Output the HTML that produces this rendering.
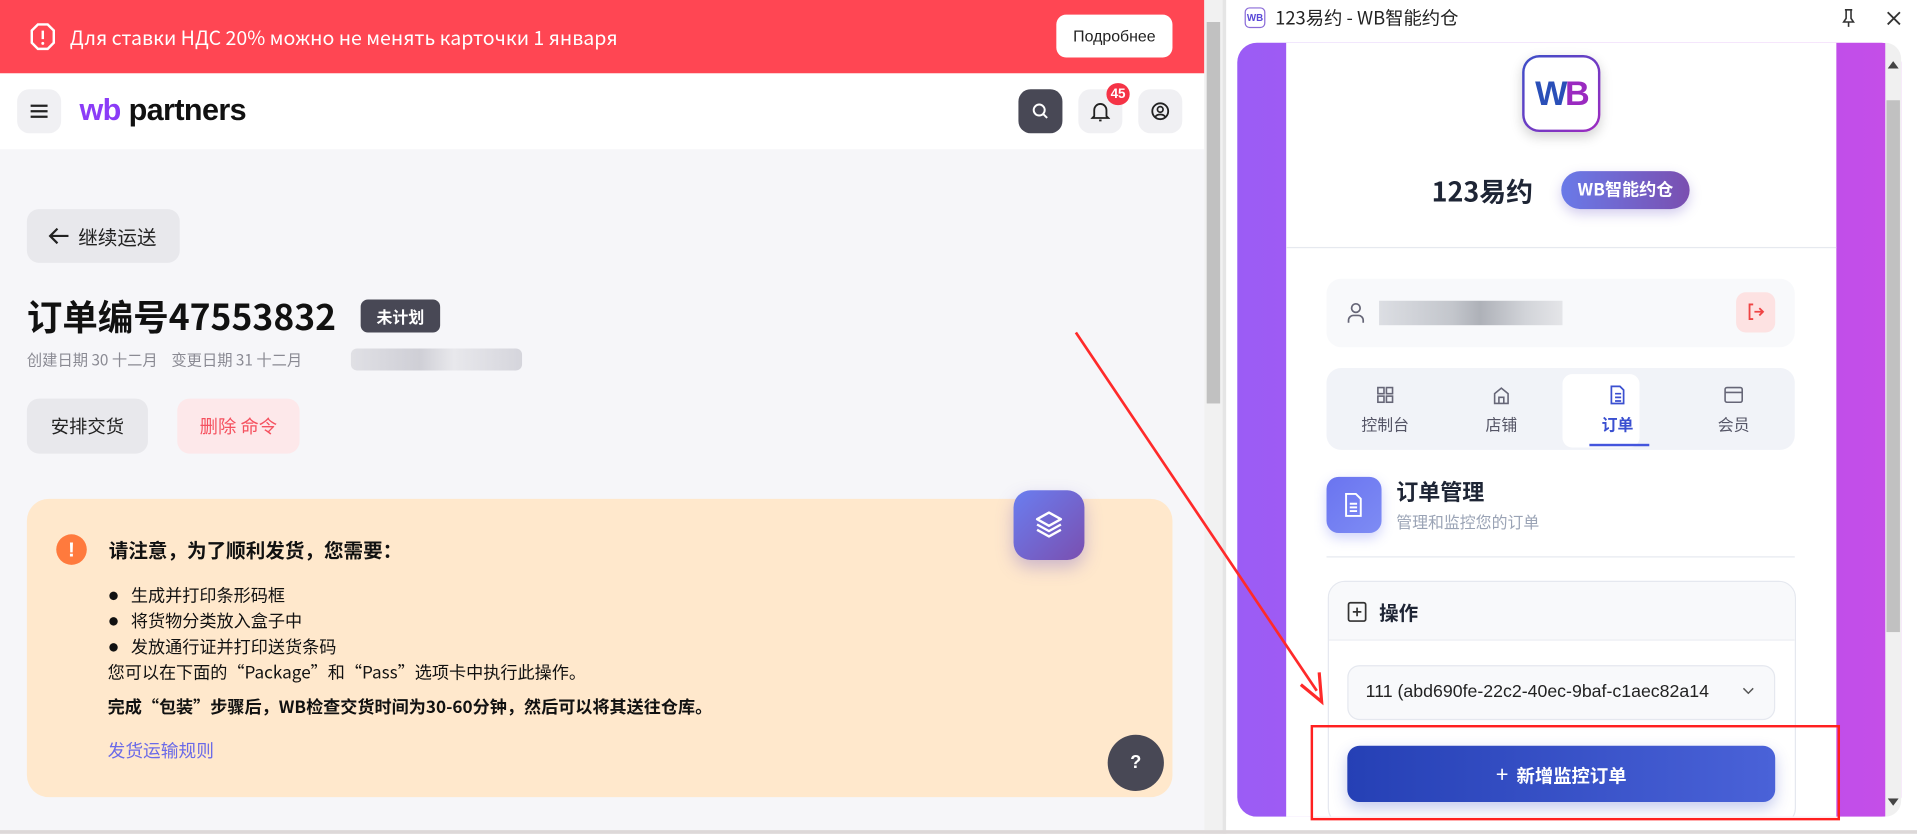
<!DOCTYPE html>
<html><head><meta charset="utf-8"><style>
*{margin:0;padding:0;box-sizing:border-box}
html,body{width:1917px;height:834px;overflow:hidden;background:#fff}
#s{position:absolute;left:0;top:0;width:1568px;height:682px;transform:scale(1.2226);transform-origin:0 0;font-family:"Liberation Sans","Noto Sans CJK SC",sans-serif;}
.a{position:absolute}
.cjk{font-family:"Noto Sans CJK SC","Liberation Sans",sans-serif}
</style></head><body><div id="s">
<!-- left -->
<div class="a" style="left:0;top:0;width:985px;height:682px;background:#f6f6f9"></div>
<div class="a" style="left:0;top:0;width:985px;height:60px;background:#ff4653"></div>
<svg class="a" style="left:24px;top:18px" width="22" height="24" viewBox="0 0 22 24"><path d="M7 2h8l5 5v10l-5 5H7l-5-5V7z" fill="none" stroke="#fff" stroke-width="2"/><path d="M11 7v7" stroke="#fff" stroke-width="2"/><circle cx="11" cy="17.5" r="1.2" fill="#fff"/></svg>
<div class="a cjk" style="left:57px;top:19px;color:#fff;font-size:16px;line-height:22px">Для ставки НДС 20% можно не менять карточки 1 января</div>
<div class="a" style="left:864px;top:12px;width:95px;height:35px;background:#fff;border-radius:8px;font-size:13px;line-height:35px;text-align:center;color:#222">Подробнее</div>
<div class="a" style="left:0;top:60px;width:985px;height:62px;background:#fff"></div>
<div class="a" style="left:14px;top:73px;width:36px;height:36px;background:#f0f0f3;border-radius:10px"></div>
<svg class="a" style="left:25px;top:85px" width="14" height="12"><path d="M0 1.5h14M0 6h14M0 10.5h14" stroke="#222" stroke-width="1.8"/></svg>
<div class="a" style="left:65px;top:75px;font-size:25px;font-weight:bold;letter-spacing:-0.5px;line-height:30px"><span style="color:#8b3cf7">wb</span> <span style="color:#111">partners</span></div>
<div class="a" style="left:833px;top:73px;width:36px;height:36px;background:#484855;border-radius:10px"></div>
<svg class="a" style="left:843px;top:83px" width="16" height="16"><circle cx="7" cy="7" r="4.5" fill="none" stroke="#fff" stroke-width="1.6"/><path d="M10.5 10.5l3 3" stroke="#fff" stroke-width="1.6"/></svg>
<div class="a" style="left:882px;top:73px;width:36px;height:36px;background:#f0f0f3;border-radius:10px"></div>
<svg class="a" style="left:892px;top:82px" width="16" height="18"><path d="M3 13V8a5 5 0 0110 0v5l1.5 1.5h-13z" fill="none" stroke="#222" stroke-width="1.5"/><path d="M7 16.5h2" stroke="#222" stroke-width="1.5"/></svg>
<div class="a" style="left:905px;top:68px;width:19px;height:18px;background:#f53346;border-radius:9px;color:#fff;font-size:11px;font-weight:bold;text-align:center;line-height:18px">45</div>
<div class="a" style="left:931px;top:73px;width:36px;height:36px;background:#f0f0f3;border-radius:10px"></div>
<svg class="a" style="left:941px;top:83px" width="16" height="16"><circle cx="8" cy="8" r="6.5" fill="none" stroke="#222" stroke-width="1.5"/><circle cx="8" cy="6.5" r="2.3" fill="none" stroke="#222" stroke-width="1.4"/><path d="M4 12.5c1.5-2.5 6.5-2.5 8 0" fill="none" stroke="#222" stroke-width="1.4"/></svg>

<div class="a" style="left:22px;top:171px;width:125px;height:44px;background:#e8e8ec;border-radius:10px"></div>
<svg class="a" style="left:39px;top:185px" width="18" height="16"><path d="M17 8H2M8 2L2 8l6 6" fill="none" stroke="#222" stroke-width="1.8"/></svg>
<div class="a cjk" style="left:64px;top:183px;font-size:16px;line-height:20px;color:#222">继续运送</div>
<div class="a cjk" style="left:22px;top:240px;font-size:29px;font-weight:bold;line-height:36px;color:#111">订单编号47553832</div>
<div class="a cjk" style="left:295px;top:245px;width:65px;height:27px;background:#484855;border-radius:6px;color:#fff;font-size:13px;font-weight:bold;text-align:center;line-height:27px">未计划</div>
<div class="a cjk" style="left:22px;top:286px;font-size:12.5px;color:#8a8a93;line-height:16px">创建日期 30 十二月 &nbsp;&nbsp;&nbsp;变更日期 31 十二月</div>
<div class="a" style="left:287px;top:285px;width:140px;height:18px;background:linear-gradient(90deg,#e0e0e5,#cfcfd6 40%,#e8e8ec 60%,#d5d5dc);border-radius:5px"></div>
<div class="a cjk" style="left:22px;top:326px;width:99px;height:45px;background:#e8e8ec;border-radius:10px;font-size:15px;line-height:45px;text-align:center;color:#222">安排交货</div>
<div class="a cjk" style="left:145px;top:326px;width:100px;height:45px;background:#fde8ea;border-radius:10px;font-size:15px;line-height:45px;text-align:center;color:#f5515f">删除 命令</div>

<div class="a" style="left:22px;top:408px;width:937px;height:244px;background:#ffe8cc;border-radius:18px"></div>
<div class="a" style="left:46px;top:437px;width:25px;height:25px;background:#ff7a3d;border-radius:50%;color:#fff;font-weight:bold;font-size:17px;text-align:center;line-height:25px">!</div>
<div class="a cjk" style="left:89px;top:438px;font-size:16px;font-weight:bold;color:#111;line-height:22px">请注意，为了顺利发货，您需要：</div>
<div class="a cjk" style="left:88px;top:477px;font-size:14px;line-height:20px;color:#111">
<div><span style="font-family:'Liberation Sans';font-size:16px">●</span>&nbsp;&nbsp;&nbsp;生成并打印条形码框</div><div><span style="font-family:'Liberation Sans';font-size:16px">●</span>&nbsp;&nbsp;&nbsp;将货物分类放入盒子中</div><div><span style="font-family:'Liberation Sans';font-size:16px">●</span>&nbsp;&nbsp;&nbsp;发放通行证并打印送货条码</div><div>您可以在下面的“Package”和“Pass”选项卡中执行此操作。</div></div>
<div class="a cjk" style="left:88px;top:568px;font-size:14px;font-weight:bold;line-height:20px;color:#111">完成“包装”步骤后，WB检查交货时间为30-60分钟，然后可以将其送往仓库。</div>
<div class="a cjk" style="left:88px;top:604px;font-size:14.5px;line-height:20px;color:#6a6ae8">发货运输规则</div>
<div class="a" style="left:829px;top:401px;width:58px;height:57px;background:linear-gradient(135deg,#6a7ef0,#7a4fb0);border-radius:14px;box-shadow:0 6px 14px rgba(110,90,200,.35)"></div>
<svg class="a" style="left:845px;top:416px" width="26" height="26" viewBox="0 0 24 24"><path d="M12 3l9 5-9 5-9-5z M3 12l9 5 9-5 M3 16l9 5 9-5" fill="none" stroke="#fff" stroke-width="1.8" stroke-linejoin="round"/></svg>
<div class="a" style="left:906px;top:601px;width:46px;height:46px;background:#484855;border-radius:50%;color:#fff;font-weight:bold;font-size:15px;text-align:center;line-height:46px">?</div>
<div class="a" style="left:985px;top:0;width:15px;height:682px;background:#f1f1f1"></div>
<div class="a" style="left:987px;top:18px;width:11px;height:312px;background:#c1c1c1"></div>
<div class="a" style="left:1000px;top:0;width:3px;height:682px;background:#e5e5e5"></div>

<!-- right -->
<div class="a" style="left:1003px;top:0;width:565px;height:682px;background:#fff"></div>
<div class="a" style="left:1018px;top:6px;width:17px;height:17px;border:1px solid #8a6ad8;border-radius:4px;font-size:8px;font-weight:bold;color:#5a4ad8;text-align:center;line-height:15px">WB</div>
<div class="a cjk" style="left:1043px;top:5px;font-size:15px;line-height:20px;color:#222">123易约 - WB智能约仓</div>
<svg class="a" style="left:1506px;top:7px" width="12" height="16"><path d="M3 1h6M4 1v7l-2 3h8l-2-3V1M6 11v4" fill="none" stroke="#333" stroke-width="1.3"/></svg>
<svg class="a" style="left:1543px;top:9px" width="12" height="12"><path d="M1 1l10 10M11 1L1 11" stroke="#333" stroke-width="1.5"/></svg>
<div class="a" style="left:1012px;top:35px;width:543px;height:633px;border-radius:16px;background:linear-gradient(90deg,#9b5cf5,#c54de8);overflow:hidden"></div>
<div class="a" style="left:1052px;top:35px;width:450px;height:633px;background:#fff"></div>
<div class="a" style="left:1542px;top:35px;width:13px;height:633px;background:#f0f0f0;border-radius:0 16px 16px 0"></div>
<div class="a" style="left:1543px;top:82px;width:11px;height:435px;background:#c1c1c1"></div>
<svg class="a" style="left:1544px;top:50px" width="9" height="6"><path d="M0 6L4.5 0L9 6z" fill="#444"/></svg>
<svg class="a" style="left:1544px;top:653px" width="9" height="6"><path d="M0 0L4.5 6L9 0z" fill="#444"/></svg>
<div class="a" style="left:1245px;top:45px;width:64px;height:63px;border-radius:14px;padding:2px;background:linear-gradient(135deg,#3a4fc8,#a02ac0);box-shadow:0 4px 10px rgba(0,0,0,.18)"><div style="width:100%;height:100%;background:#fff;border-radius:12px;text-align:center;font-weight:bold;font-size:28px;line-height:59px;letter-spacing:-2px;color:#5a3ac8"><span style="color:#2a4fb8">W</span><span style="color:#9a2ac0">B</span></div></div>
<div class="a cjk" style="left:1171px;top:140px;font-size:22px;font-weight:bold;color:#1e2535;line-height:32px">123易约</div>
<div class="a cjk" style="left:1277px;top:140px;width:105px;height:31px;border-radius:16px;background:linear-gradient(90deg,#6a7ae8,#7a4fb0);color:#fff;font-weight:bold;font-size:14px;text-align:center;line-height:31px;box-shadow:0 4px 10px rgba(110,90,200,.3)">WB智能约仓</div>
<div class="a" style="left:1052px;top:202px;width:450px;height:1px;background:#e6e9ef"></div>
<div class="a" style="left:1085px;top:228px;width:383px;height:56px;background:#f8f9fb;border-radius:12px"></div>
<svg class="a" style="left:1101px;top:247px" width="16" height="18"><circle cx="8" cy="5" r="3.5" fill="none" stroke="#667" stroke-width="1.4"/><path d="M2 17v-2a4 4 0 014-4h4a4 4 0 014 4v2" fill="none" stroke="#667" stroke-width="1.4"/></svg>
<div class="a" style="left:1128px;top:246px;width:150px;height:20px;background:linear-gradient(90deg,#dcdee3,#c3c6cc 40%,#aeb1b8 55%,#d2d4d9 80%,#e4e5e8)"></div>
<div class="a" style="left:1420px;top:239px;width:32px;height:33px;background:#fde2e2;border-radius:8px"></div>
<svg class="a" style="left:1428px;top:247px" width="16" height="16"><path d="M6 2H3v12h3M7 8h7M11 5l3 3-3 3" fill="none" stroke="#ef4444" stroke-width="1.5"/></svg>
<div class="a" style="left:1085px;top:301px;width:383px;height:67px;background:#f1f3f8;border-radius:12px"></div>
<div class="a" style="left:1278px;top:306px;width:63px;height:60px;background:#fff;border-radius:8px"></div>
<div class="a" style="left:1300px;top:363px;width:49px;height:2px;background:#4455dd"></div>
<svg class="a" style="left:1126px;top:316px" width="14" height="14"><g fill="none" stroke="#667" stroke-width="1.3"><rect x="1" y="1" width="5" height="5"/><rect x="8" y="1" width="5" height="5"/><rect x="1" y="8" width="5" height="5"/><rect x="8" y="8" width="5" height="5"/></g></svg>
<svg class="a" style="left:1221px;top:316px" width="14" height="15"><path d="M1.5 14V6L7 1.5 12.5 6v8zM5 14V9h4v5" fill="none" stroke="#667" stroke-width="1.3"/></svg>
<svg class="a" style="left:1316px;top:315px" width="14" height="16"><path d="M2 1h7l3 3v11H2zM5 7h5M5 10h5M5 13h5" fill="none" stroke="#3a4fd0" stroke-width="1.4"/></svg>
<svg class="a" style="left:1410px;top:316px" width="16" height="14"><rect x="1" y="1" width="14" height="12" rx="1.5" fill="none" stroke="#667" stroke-width="1.3"/><path d="M1 5h14" stroke="#667" stroke-width="1.3"/></svg>
<div class="a cjk" style="left:1103px;top:338px;width:60px;text-align:center;font-size:13px;color:#556;line-height:18px">控制台</div>
<div class="a cjk" style="left:1198px;top:338px;width:60px;text-align:center;font-size:13px;color:#556;line-height:18px">店铺</div>
<div class="a cjk" style="left:1293px;top:338px;width:60px;text-align:center;font-size:13px;color:#3a4fd0;font-weight:bold;line-height:18px">订单</div>
<div class="a cjk" style="left:1388px;top:338px;width:60px;text-align:center;font-size:13px;color:#556;line-height:18px">会员</div>
<div class="a" style="left:1085px;top:390px;width:45px;height:46px;border-radius:10px;background:linear-gradient(135deg,#6a74f0,#7e8cf4);box-shadow:0 4px 10px rgba(100,110,240,.3)"></div>
<svg class="a" style="left:1099px;top:403px" width="16" height="20"><path d="M2 1h8l4 4v14H2zM5 9h6M5 12h6M5 15h6" fill="none" stroke="#fff" stroke-width="1.6"/></svg>
<div class="a cjk" style="left:1142px;top:390px;font-size:18px;font-weight:bold;color:#1e2535;line-height:24px">订单管理</div>
<div class="a cjk" style="left:1142px;top:418px;font-size:13px;color:#9aa3b5;line-height:18px">管理和监控您的订单</div>
<div class="a" style="left:1085px;top:455px;width:383px;height:1px;background:#e6e9ef"></div>
<div class="a" style="left:1086px;top:475px;width:383px;height:200px;border:1px solid #e5e8ef;border-radius:14px;overflow:hidden"><div style="height:48px;background:#f8f9fb;border-bottom:1px solid #eceef3"></div></div>
<svg class="a" style="left:1102px;top:492px" width="16" height="17"><rect x="1" y="1" width="14" height="15" rx="1.5" fill="none" stroke="#333" stroke-width="1.4"/><path d="M8 5v7M4.5 8.5h7" stroke="#333" stroke-width="1.4"/></svg>
<div class="a cjk" style="left:1128px;top:489px;font-size:16px;font-weight:bold;color:#1e2535;line-height:22px">操作</div>
<div class="a" style="left:1102px;top:544px;width:350px;height:45px;background:#f8f9fb;border:1px solid #e5e8ef;border-radius:10px"></div>
<div class="a" style="left:1117px;top:556px;font-size:14.5px;color:#222;line-height:20px;white-space:nowrap">111 (abd690fe-22c2-40ec-9baf-c1aec82a14</div>
<svg class="a" style="left:1425px;top:562px" width="10" height="7"><path d="M1 1l4 4 4-4" fill="none" stroke="#555" stroke-width="1.2"/></svg>
<div class="a cjk" style="left:1102px;top:610px;width:350px;height:46px;border-radius:10px;background:linear-gradient(90deg,#2540b5,#4a62d8);color:#fff;font-size:15px;font-weight:bold;text-align:center;line-height:46px;box-shadow:0 5px 12px rgba(60,80,200,.3)"><span style="font-weight:normal;font-size:18px">+</span>&nbsp; 新增监控订单</div>
<div class="a" style="left:1003px;top:668px;width:565px;height:14px;background:#fff"></div>
<div class="a" style="left:1072px;top:593px;width:433px;height:78px;border:2.5px solid #ff2020"></div>
<div class="a" style="left:0;top:679px;width:1568px;height:3px;background:#ddd8d8"></div>
<!-- arrow -->
<svg class="a" style="left:0;top:0" width="1568" height="682"><path d="M880 272 L1077 565" stroke="#ff2a2a" stroke-width="2.2"/><path d="M1064 560 L1081 574 L1079 550" fill="none" stroke="#ff2a2a" stroke-width="2.6"/></svg>
</div></body></html>
